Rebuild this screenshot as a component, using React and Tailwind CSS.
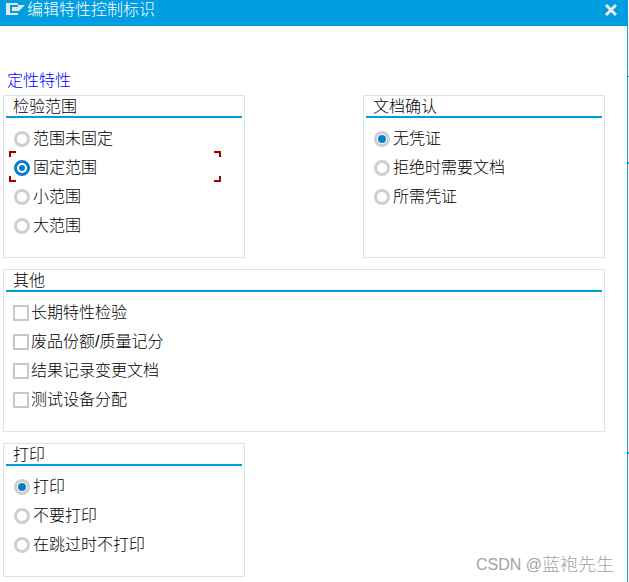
function Radio({ label, checked, focused }) {
  return (
    <div className="relative flex items-center h-[29px] pl-[8px]">
      {focused ? (
        <div className="w-4 h-4 rounded-full border-[3px] border-[#0a7fc9] flex items-center justify-center">
          <div className="w-1.5 h-1.5 rounded-full bg-[#0a7fc9]" />
        </div>
      ) : (
        <div className="w-4 h-4 rounded-full border-[3px] border-[#cfcfcf] flex items-center justify-center">
          {checked && <div className="w-2 h-2 rounded-full bg-[#0a7fc9]" />}
        </div>
      )}
      <span className="ml-[3px] text-[16px] leading-none font-light text-black">{label}</span>
      {focused && (
        <>
          <div className="absolute left-[3px] top-[-2px] w-[7px] h-[6px] border-l-2 border-t-2 border-[#a00000]" />
          <div className="absolute left-[3px] bottom-0 w-[7px] h-[6px] border-l-2 border-b-2 border-[#a00000]" />
          <div className="absolute left-[208px] top-[-2px] w-[7px] h-[6px] border-r-2 border-t-2 border-[#a00000]" />
          <div className="absolute left-[208px] bottom-0 w-[7px] h-[6px] border-r-2 border-b-2 border-[#a00000]" />
        </>
      )}
    </div>
  );
}

function Check({ label }) {
  return (
    <div className="flex items-center h-[29px] pl-[7px]">
      <div className="w-4 h-4 border-2 border-[#c8c8c8] bg-white" />
      <span className="ml-[2px] text-[16px] leading-none font-light text-black">{label}</span>
    </div>
  );
}

function Group({ title, className, children }) {
  return (
    <div className={`border border-[#e2e2e2] px-[2px] ${className}`}>
      <div className="h-[22px] border-b-2 border-[#009de0] pl-[7px] text-[16px] leading-[22px] font-light text-black">
        {title}
      </div>
      <div className="pt-[6px]">{children}</div>
    </div>
  );
}

export default function App() {
  return (
    <div
      className="relative w-[629px] h-[582px] pr-px bg-white overflow-hidden flex flex-col"
      style={{ fontFamily: '"Liberation Sans", "Noto Sans CJK SC", sans-serif' }}
    >
      <div className="h-[26px] shrink-0 bg-[#009de0] flex items-start pl-[6px] pr-[11px] text-white">
        <svg width="19" height="12" viewBox="0 0 19 12" className="mt-[3px]">
          <path d="M0 0H12V2H4V10H12V12H0Z" fill="#e6e6e6" />
          <path d="M6 4H12V2H19L13 8H6Z" fill="#e6e6e6" />
        </svg>
        <span className="ml-[2px] text-[16px] leading-[20px] font-light">编辑特性控制标识</span>
        <svg width="12" height="12" viewBox="0 0 12 12" className="ml-auto mt-[4px]">
          <path d="M1 1L11 11M11 1L1 11" stroke="#ececec" strokeWidth="3" />
        </svg>
      </div>

      <div className="flex-1 flex flex-col pl-[3px] pr-[23px]">
        <div className="h-[69px] flex items-end pl-[4px] pb-[6px] text-[16px] leading-none font-light text-[#0000ff]">
          定性特性
        </div>
        <div className="flex justify-between">
          <Group title="检验范围" className="w-[242px] h-[163px]">
            <Radio label="范围未固定" />
            <Radio label="固定范围" checked focused />
            <Radio label="小范围" />
            <Radio label="大范围" />
          </Group>
          <Group title="文档确认" className="w-[242px] h-[163px]">
            <Radio label="无凭证" checked />
            <Radio label="拒绝时需要文档" />
            <Radio label="所需凭证" />
          </Group>
        </div>
        <Group title="其他" className="w-[602px] h-[163px] mt-[11px]">
          <Check label="长期特性检验" />
          <Check label="废品份额/质量记分" />
          <Check label="结果记录变更文档" />
          <Check label="测试设备分配" />
        </Group>
        <Group title="打印" className="w-[242px] h-[134px] mt-[11px]">
          <Radio label="打印" checked />
          <Radio label="不要打印" />
          <Radio label="在跳过时不打印" />
        </Group>
      </div>

      {/* edge of the window behind */}
      <div className="absolute top-[26px] bottom-0 right-px w-px bg-[#00a0e4]" />
      <div className="absolute top-[76px] right-0 w-px h-px bg-[#00a0e4]" />
      <div className="absolute top-[162px] right-0 w-px h-[2px] bg-[#00a0e4]" />
      <div className="absolute top-[452px] right-0 w-px h-[2px] bg-[#00a0e4]" />

      <div className="absolute left-[476px] top-[554px] flex items-center h-[22px] text-[#a3a3a3] text-[16px] leading-none font-light whitespace-pre">
        <span>CSDN @</span>
        <span className="text-[18px]">蓝袍先生</span>
      </div>
    </div>
  );
}
